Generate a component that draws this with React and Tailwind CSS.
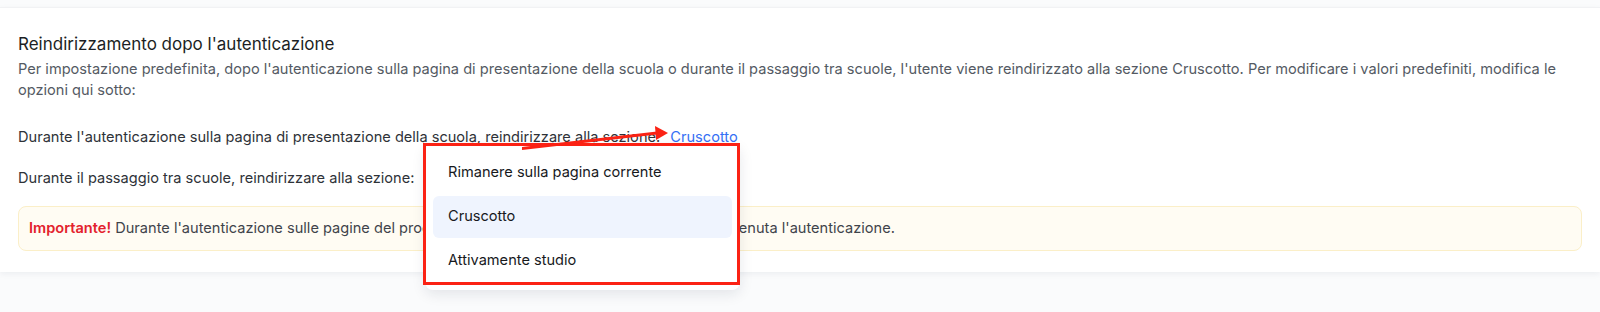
import React from "react";

export default function App() {
  return (
    <div
      className="w-[1600px] h-[312px] bg-[#fafbfc] pt-[7px] relative overflow-hidden"
      style={{ fontFamily: "Inter, 'Noto Sans', sans-serif" }}
    >
      <div className="bg-white shadow-[0_2px_6px_rgba(20,30,60,0.06)] border-t border-[#f1f2f4] px-[18px] pt-[24px] pb-[21px]">
        <h2 className="text-[17px] leading-6 text-[#1c1f24] font-normal">
          Reindirizzamento dopo l'autenticazione
        </h2>
        <p className="mt-[3px] text-[14.6px] leading-[21px] text-[#545a63]">
          Per impostazione predefinita, dopo l'autenticazione sulla pagina di presentazione della scuola o durante il passaggio tra scuole, l'utente viene reindirizzato alla sezione Cruscotto. Per modificare i valori predefiniti, modifica le opzioni qui sotto:
        </p>
        <p className="mt-[26px] text-[14.6px] leading-[21px] text-[#2e3238]">
          Durante l'autenticazione sulla pagina di presentazione della scuola, reindirizzare alla sezione:{" "}
          <span className="ml-[6px] text-[#3570f5]">Cruscotto</span>
        </p>
        <p className="mt-[20px] text-[14.6px] leading-[21px] text-[#2e3238]">
          Durante il passaggio tra scuole, reindirizzare alla sezione:
        </p>
        <div className="mt-[17px] rounded-lg border border-[#fbefc8] bg-[#fffcf3] px-[10px] py-[11px] text-[14.6px] leading-[21px] text-[#3f444b]">
          <span className="font-semibold text-[#e3222d]">Importante!</span>{" "}
          Durante l'autenticazione sulle pagine del progetto, l'utente rimarrà sulla pagina in cui è avvenuta l'autenticazione.
        </div>
      </div>

      {/* Dropdown menu */}
      <div className="absolute left-[425px] top-[144px] w-[315px] bg-white rounded-lg shadow-[0_4px_14px_rgba(20,30,60,0.10)] p-[8px] flex flex-col gap-[2px] text-[14.6px] text-[#17191d]">
        <div className="h-[42px] flex items-center px-[15px] rounded-md">Rimanere sulla pagina corrente</div>
        <div className="h-[42px] flex items-center px-[15px] rounded-md bg-[#eff4fe]">Cruscotto</div>
        <div className="h-[42px] flex items-center px-[15px] rounded-md">Attivamente studio</div>
      </div>

      {/* Red annotation box */}
      <div className="absolute left-[423px] top-[143px] w-[317px] h-[142px] border-[3px] border-[#fb2214]" />

      {/* Red arrow */}
      <svg className="absolute left-0 top-0" width="1600" height="312" viewBox="0 0 1600 312">
        <polygon points="522,147 657,131.5 657,134.5 522,150" fill="#fb2214" />
        <polygon points="655,126 668,133 656,140" fill="#fb2214" />
      </svg>
    </div>
  );
}
